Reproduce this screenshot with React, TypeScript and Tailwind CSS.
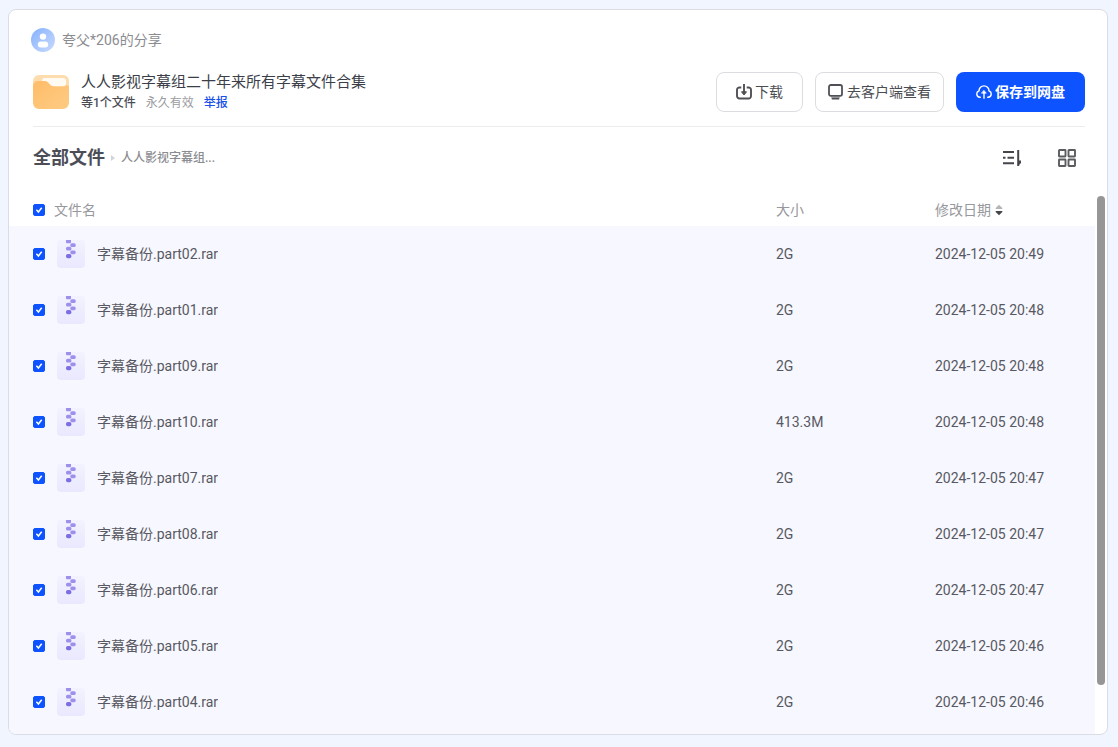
import { useState } from "react";

const files = [
    { name: "字幕备份.part02.rar", size: "2G", date: "2024-12-05 20:49" },
    { name: "字幕备份.part01.rar", size: "2G", date: "2024-12-05 20:48" },
    { name: "字幕备份.part09.rar", size: "2G", date: "2024-12-05 20:48" },
    { name: "字幕备份.part10.rar", size: "413.3M", date: "2024-12-05 20:48" },
    { name: "字幕备份.part07.rar", size: "2G", date: "2024-12-05 20:47" },
    { name: "字幕备份.part08.rar", size: "2G", date: "2024-12-05 20:47" },
    { name: "字幕备份.part06.rar", size: "2G", date: "2024-12-05 20:47" },
    { name: "字幕备份.part05.rar", size: "2G", date: "2024-12-05 20:46" },
    { name: "字幕备份.part04.rar", size: "2G", date: "2024-12-05 20:46" },
];

function AvatarIcon() {
    return (
        <svg className="w-6 h-6 shrink-0" viewBox="0 0 24 24" aria-hidden="true">
            <defs>
                <linearGradient id="avatar" x1="0" y1="0" x2="1" y2="1">
                    <stop offset="0" stopColor="#86b2fd" />
                    <stop offset="1" stopColor="#c9dafd" />
                </linearGradient>
            </defs>
            <circle cx="12" cy="12" r="12" fill="url(#avatar)" />
            <circle cx="12" cy="8.6" r="3.2" fill="#fff" />
            <rect x="6.8" y="13.4" width="10.4" height="6" rx="3" fill="#fff" />
        </svg>
    );
}

function FolderIcon() {
    return (
        <svg className="w-9 h-9 shrink-0" viewBox="0 0 36 36" aria-hidden="true">
            <defs>
                <linearGradient id="folder" x1="0" y1="0" x2="1" y2="1">
                    <stop offset="0" stopColor="#ffbd69" />
                    <stop offset="1" stopColor="#fdcb83" />
                </linearGradient>
            </defs>
            <rect x="0" y="1" width="36" height="30" rx="6" fill="#fddcae" />
            <rect x="9" y="4" width="24" height="14" rx="3" fill="#fffaf2" />
            <path d="M0 12a5 5 0 0 1 5-5h6.500c1.500 0 2.700.5 3.700 1.600l2 2.200c.9 1 2 1.400 3.300 1.400H31a5 5 0 0 1 5-.5V29a6 6 0 0 1-6 6H6a6 6 0 0 1-6-6z" fill="url(#folder)" />
        </svg>
    );
}

function DownloadIcon() {
    return (
        <svg className="w-4 h-4" viewBox="0 0 16 16" fill="none" stroke="#505156" strokeWidth="1.900" strokeLinejoin="round" aria-hidden="true">
            <path d="M5.300 3.500H3.400A2.400 2.400 0 0 0 1 5.900v6.200a2.400 2.400 0 0 0 2.400 2.400h9.200a2.400 2.400 0 0 0 2.400-2.400V5.900a2.400 2.400 0 0 0-2.400-2.400h-1.900" />
            <path d="M8 0v8.500" />
            <path d="M5.500 7.800h5L8 11z" fill="#505156" strokeWidth="1" />
        </svg>
    );
}

function ClientIcon() {
    return (
        <svg className="w-4 h-4" viewBox="0 0 16 16" fill="none" stroke="#505156" strokeWidth="1.800" strokeLinecap="round" aria-hidden="true">
            <rect x="1" y="1" width="13" height="10.800" rx="1.800" />
            <path d="M4.500 14.700h6" />
            <path d="M3.500 13.300h8" strokeWidth=".6" />
        </svg>
    );
}

function CloudIcon() {
    return (
        <svg className="w-4 h-4" viewBox="0 0 16 16" fill="none" stroke="#fff" strokeWidth="1.400" strokeLinecap="round" strokeLinejoin="round" aria-hidden="true">
            <path d="M4.300 13.300h-.5A3.300 3.300 0 0 1 3 6.900a5 5 0 0 1 10 0 3.300 3.300 0 0 1-.8 6.400h-.5" />
            <path d="M8 14.300V8" />
            <path d="M5.700 9.200h4.600L8 6.400z" fill="#fff" strokeWidth=".6" />
        </svg>
    );
}

function SortIcon() {
    return (
        <svg className="w-[18px] h-[18px]" viewBox="0 0 18 18" fill="none" stroke="#45464b" strokeWidth="1.900" aria-hidden="true">
            <path d="M0 3h11M0 8.700h2.500M4.500 8.700H11M0 14.200h11" />
            <path d="M15.200 1v16" strokeWidth="2" />
            <path d="M15 11.500h3V14l-3 3z" fill="#45464b" stroke="none" />
        </svg>
    );
}

function GridIcon() {
    return (
        <svg className="w-[18px] h-[18px]" viewBox="0 0 18 18" fill="none" stroke="#5b5c60" strokeWidth="1.900" aria-hidden="true">
            <rect x="1" y="1" width="6.500" height="6.500" rx=".5" />
            <rect x="10.500" y="1" width="6.500" height="6.500" rx=".5" />
            <rect x="1" y="10.500" width="6.500" height="6.500" rx=".5" />
            <rect x="10.500" y="10.500" width="6.500" height="6.500" rx=".5" />
        </svg>
    );
}

function ArchiveIcon() {
    return (
        <svg className="w-7 h-7 shrink-0" viewBox="0 0 28 28" aria-hidden="true">
            <defs>
                <linearGradient id="archive" x1="0" y1="0" x2="0" y2="1">
                    <stop offset="0" stopColor="#f3f2ff" />
                    <stop offset="1" stopColor="#e9e8fe" />
                </linearGradient>
            </defs>
            <path d="M3 0h22a3 3 0 0 1 3 3v21a4 4 0 0 1-4 4H4a4 4 0 0 1-4-4V3a3 3 0 0 1 3-3z" fill="url(#archive)" />
            <g fill="#9b90ec">
                <path d="M9 0h5v2.200a1 1 0 0 1-1 1h-3a1 1 0 0 1-1-1z" />
                <rect x="13.300" y="3.200" width="5.400" height="3.800" rx="1.600" />
                <rect x="9" y="6.800" width="5.400" height="3.800" rx="1.600" />
                <rect x="13.300" y="10.400" width="5.400" height="3.800" rx="1.600" />
            </g>
            <rect x="9" y="14" width="5.400" height="4.200" rx="1.800" fill="#7b70e2" />
        </svg>
    );
}

function Checkbox({ label, checked, onChange }: { label: string; checked: boolean; onChange: () => void }) {
    return (
        <label className="relative block w-3 h-3 shrink-0">
            <input
                type="checkbox"
                aria-label={label}
                checked={checked}
                onChange={onChange}
                className="block w-3 h-3 appearance-none rounded-xs border border-[#0d53ff] checked:bg-[#0d53ff]"
            />
            {checked && (
                <svg className="absolute inset-0 w-3 h-3 pointer-events-none" viewBox="0 0 12 12" fill="none" stroke="#fff" strokeWidth="1.500" aria-hidden="true">
                    <path d="M3.400 5.800 5.400 8 8.700 3.800" />
                </svg>
            )}
        </label>
    );
}

export default function App() {
    const [selected, setSelected] = useState<string[]>(files.map((f) => f.name));
    const allSelected = selected.length === files.length;

    const toggle = (name: string) =>
        setSelected((prev) => (prev.includes(name) ? prev.filter((n) => n !== name) : [...prev, name]));

    return (
        <div className="min-h-screen flex bg-[#f1f5ff] pt-[9px] pr-[10px] pb-3 pl-2 text-sm text-[#575962] font-[Roboto,'Noto_Sans_CJK_SC',sans-serif]">
            <main className="flex-1 min-w-0 flex flex-col bg-white border border-[#dcdde4] rounded-lg overflow-hidden">
                {/* Share info */}
                <header className="px-[22px] pt-[18px]">
                    <div className="flex items-center gap-[7px] text-[#8b8c91]">
                        <AvatarIcon />
                        <span>夸父*206的分享</span>
                    </div>
                    <div className="flex items-center justify-between pt-[19px] pb-[13px] pl-0.5">
                        <div className="flex items-center gap-3">
                            <FolderIcon />
                            <div>
                                <h1 className="text-[15px] leading-[22px] text-[#3c3f4a]">人人影视字幕组二十年来所有字幕文件合集</h1>
                                <p className="flex gap-[10px] text-xs leading-5">
                                    <span className="font-medium text-[#4a4c56]">等1个文件</span>
                                    <span className="text-[#9a9ba0]">永久有效</span>
                                    <a href="#" className="font-medium text-[#1650e8]">举报</a>
                                </p>
                            </div>
                        </div>
                        <div className="flex gap-3 text-[#4b4c52]">
                            <button className="h-10 px-[19px] flex items-center gap-[3px] border border-[#dcdde1] rounded-lg">
                                <DownloadIcon />
                                下载
                            </button>
                            <button className="h-10 px-3 flex items-center gap-[3px] border border-[#dcdde1] rounded-lg">
                                <ClientIcon />
                                去客户端查看
                            </button>
                            <button className="h-10 px-5 flex items-center gap-[3px] bg-[#0d53ff] text-white rounded-lg font-bold">
                                <CloudIcon />
                                保存到网盘
                            </button>
                        </div>
                    </div>
                    <hr className="ml-0.5 border-[#ececef]" />
                </header>

                {/* Breadcrumb and view switches */}
                <div className="flex items-center justify-between pl-6 pr-[31px] h-[62px]">
                    <nav className="flex items-center">
                        <a href="#" className="text-lg font-bold text-[#4b4d57]">全部文件</a>
                        <svg className="w-4 h-2" viewBox="0 0 16 8" aria-hidden="true">
                            <path d="M6 1l4 3-4 3z" fill="#d3d4d9" />
                        </svg>
                        <a href="#" className="text-xs font-medium text-[#8b8c91]">人人影视字幕组...</a>
                    </nav>
                    <div className="flex gap-[37px]">
                        <button aria-label="排序"><SortIcon /></button>
                        <button aria-label="网格视图"><GridIcon /></button>
                    </div>
                </div>

                {/* File list */}
                <div className="flex-1 flex pt-[5px]">
                    <div className="flex-1 min-w-0 flex flex-col">
                        <table className="w-full table-fixed text-left">
                            <thead className="text-[#97989d]">
                                <tr className="h-8">
                                    <th className="pl-6 font-normal">
                                        <div className="flex items-center gap-[9px]">
                                            <Checkbox
                                                label="全选"
                                                checked={allSelected}
                                                onChange={() => setSelected(allSelected ? [] : files.map((f) => f.name))}
                                            />
                                            文件名
                                        </div>
                                    </th>
                                    <th className="w-[159px] font-normal">大小</th>
                                    <th className="w-40 font-normal">
                                        <button className="flex items-center gap-1">
                                            修改日期
                                            <svg className="w-2 h-3" viewBox="0 0 8 12" aria-hidden="true">
                                                <path d="M4 .7 7.300 4v1H.7V4z" fill="#b4b5b9" />
                                                <path d="M4 11.300.7 8V7h6.600v1z" fill="#45464b" />
                                            </svg>
                                        </button>
                                    </th>
                                </tr>
                            </thead>
                            <tbody className="bg-[#f7f7ff]">
                                {files.map((file) => (
                                    <tr key={file.name} className="h-14">
                                        <td className="pl-6">
                                            <div className="flex items-center gap-3">
                                                <Checkbox
                                                    label={file.name}
                                                    checked={selected.includes(file.name)}
                                                    onChange={() => toggle(file.name)}
                                                />
                                                <ArchiveIcon />
                                                <span className="truncate">{file.name}</span>
                                            </div>
                                        </td>
                                        <td>{file.size}</td>
                                        <td>{file.date}</td>
                                    </tr>
                                ))}
                            </tbody>
                        </table>
                        <div className="flex-1 bg-[#f7f7ff]" />
                    </div>
                    {/* Scrollbar */}
                    <div className="w-3 px-0.5 pt-0.5 flex flex-col">
                        <div className="flex-[10] rounded-full bg-[#969696]" />
                        <div className="flex-1" />
                    </div>
                </div>
            </main>
        </div>
    );
}
